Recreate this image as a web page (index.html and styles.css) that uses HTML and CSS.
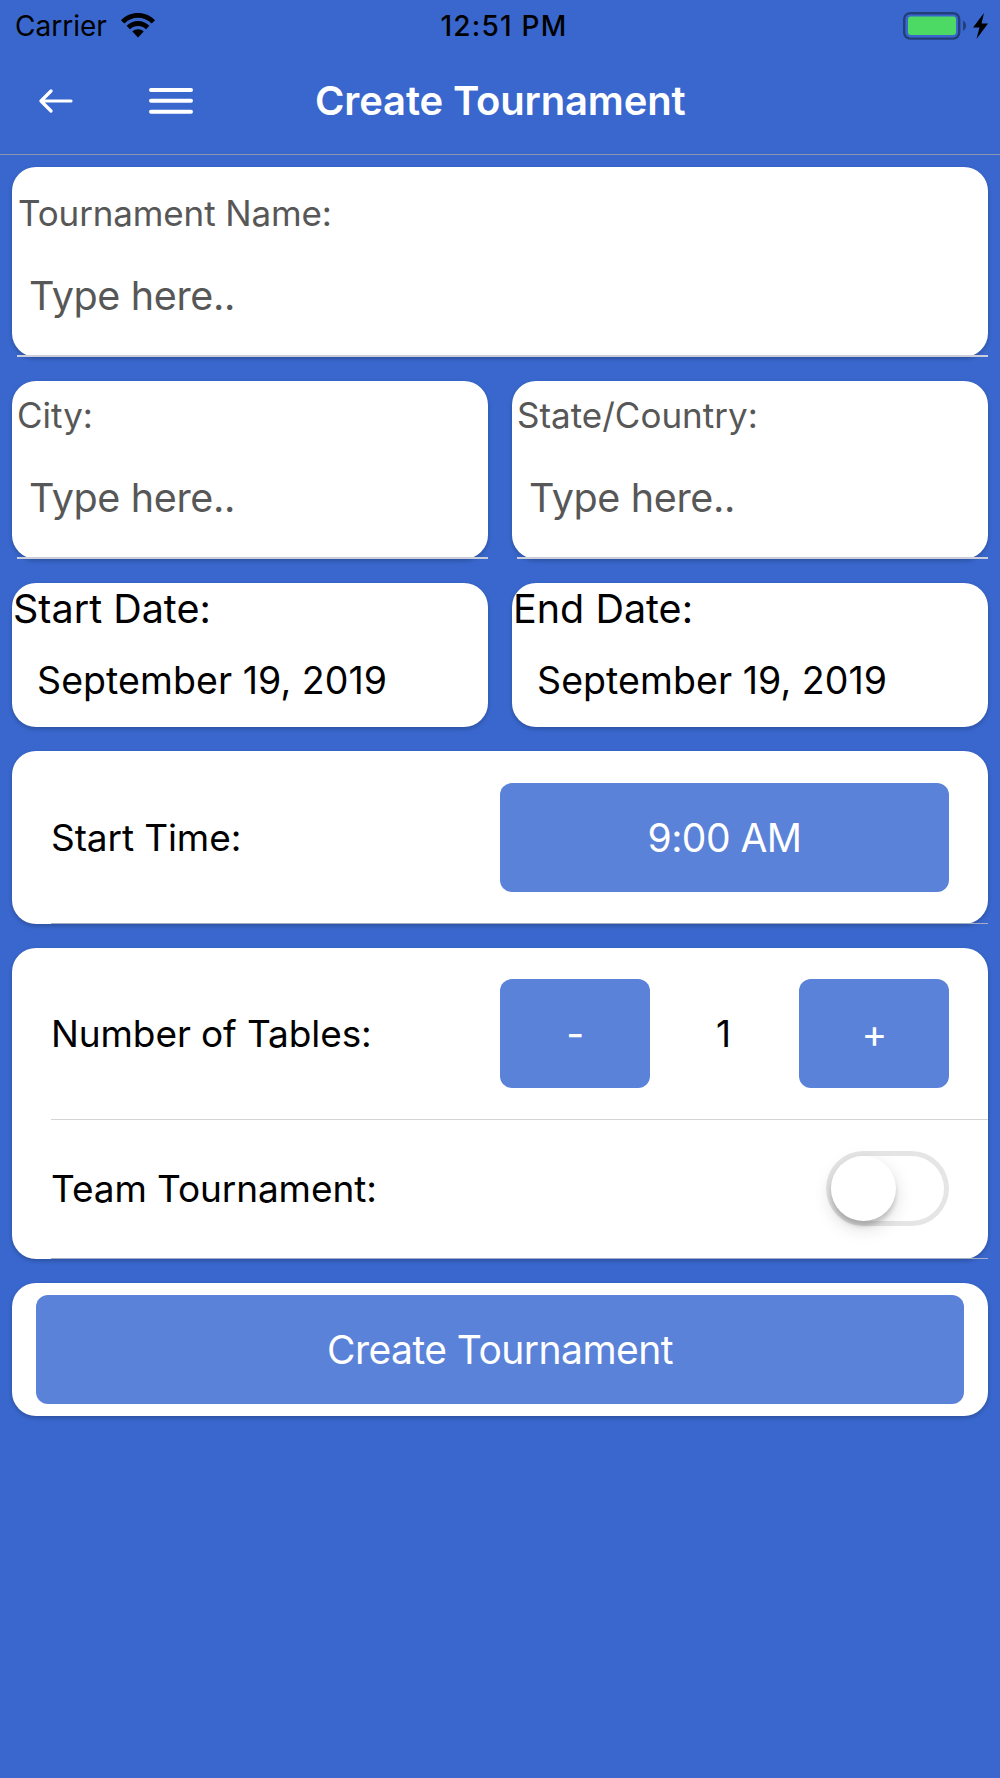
FILE: index.html
```html
<!DOCTYPE html>
<html lang="en">
<head>
    <meta charset="UTF-8">
    <meta name="viewport" content="width=device-width, initial-scale=1.0">
    <title>Create Tournament</title>
    <link rel="stylesheet" href="styles.css">
</head>
<body>
    <header class="header">
        <div class="status-bar">
            <div class="status-left">
                <span class="carrier">Carrier</span>
                <svg class="wifi" width="34" height="25" viewBox="0 0 34 25">
                    <path d="M0 7.2C9.5-2.4 24.500-2.400 34 7.200L30.700 10.500C23 2.800 11 2.800 3.300 10.500Z"/>
                    <path d="M5.600 12.800C12 6.500 22 6.500 28.400 12.800L25 16.200C20.500 11.800 13.500 11.800 9 16.200Z"/>
                    <path d="M11.300 18.600C14.500 15.500 19.500 15.500 22.700 18.600L17 24.400Z"/>
                </svg>
            </div>
            <span class="clock">12:51 PM</span>
            <div class="status-right">
                <svg width="86" height="28" viewBox="0 0 86 28">
                    <rect x="1.200" y="1.200" width="55" height="25.400" rx="6" fill="none" stroke="#223e7b" stroke-width="2.400"/>
                    <rect x="5" y="4.500" width="48" height="18.500" rx="3" fill="#4cd964"/>
                    <path d="M60 8.500C64 10.500 64 17 60 19Z" fill="#223e7b"/>
                    <path d="M81 1L70 15.500H76.500L73.500 27L85 11.500H78.500Z"/>
                </svg>
            </div>
        </div>
        <div class="navbar">
            <svg class="back" width="34" height="24" viewBox="0 0 34 24">
                <path d="M12 2L2 12L12 22M2.500 12H32"/>
            </svg>
            <svg class="menu" width="44" height="28" viewBox="0 0 44 28">
                <path d="M2 3H42M2 13.800H42M2 24.700H42"/>
            </svg>
            <h1>Create Tournament</h1>
        </div>
    </header>
    <form class="content">
        <div class="card field field-name">
            <label for="name">Tournament Name:</label>
            <input type="text" id="name" placeholder="Type here..">
        </div>
        <div class="columns">
            <div class="card field">
                <label for="city">City:</label>
                <input type="text" id="city" placeholder="Type here..">
            </div>
            <div class="card field">
                <label for="state">State/Country:</label>
                <input type="text" id="state" placeholder="Type here..">
            </div>
        </div>
        <div class="columns">
            <div class="card date">
                <span class="date-label">Start Date:</span>
                <span class="date-value">September 19, 2019</span>
            </div>
            <div class="card date">
                <span class="date-label">End Date:</span>
                <span class="date-value">September 19, 2019</span>
            </div>
        </div>
        <div class="card list">
            <div class="row">
                <span class="row-label">Start Time:</span>
                <button type="button" class="btn btn-time">9:00 AM</button>
            </div>
        </div>
        <div class="card list list-tables">
            <div class="row row-count">
                <span class="row-label">Number of Tables:</span>
                <div class="stepper">
                    <button type="button" class="btn">-</button>
                    <span class="count">1</span>
                    <button type="button" class="btn">+</button>
                </div>
            </div>
            <div class="row row-team">
                <span class="row-label">Team Tournament:</span>
                <div class="switch"><div class="knob"></div></div>
            </div>
        </div>
        <div class="card submit">
            <button type="button" class="btn">Create Tournament</button>
        </div>
    </form>
</body>
</html>
```
FILE: styles.css
```css
* {
    box-sizing: border-box;
}

body {
    margin: 0;
    min-height: 1778px;
    background: #3967cd;
    color: #000;
    font-family: Inter, "Liberation Sans", sans-serif;
}

.header {
    height: 155px;
    border-bottom: 1px solid #8b95ac;
}

.status-bar {
    display: grid;
    grid-template-columns: 1fr auto 1fr;
    align-items: center;
    height: 51px;
    padding: 0 11px 0 15px;
    font-size: 28px;
}

.status-left {
    display: flex;
    align-items: center;
    gap: 14px;
}

.clock {
    padding-left: 4px;
    font-weight: 500;
    letter-spacing: 1.2px;
}

.status-right {
    display: flex;
    justify-content: flex-end;
}

.navbar {
    display: grid;
    grid-template-columns: 110px 166px 1fr;
    align-items: center;
    height: 99px;
    padding-left: 39px;
    color: #fff;
}

.back,
.menu {
    fill: none;
    stroke: #fff;
    stroke-width: 3.2;
    stroke-linecap: round;
    stroke-linejoin: round;
}

.menu {
    stroke-width: 4;
}

h1 {
    margin: 0;
    font-size: 40px;
    font-weight: 600;
    line-height: 48px;
    letter-spacing: -0.15px;
    white-space: nowrap;
}

.content {
    display: flex;
    flex-direction: column;
    gap: 24px;
    padding: 12px;
}

.columns {
    display: grid;
    grid-template-columns: 1fr 1fr;
    gap: 24px;
}

.card {
    position: relative;
    background: #fff;
    border-radius: 24px;
    box-shadow: 0 2px 4px rgba(0, 0, 0, 0.22);
}

.field {
    display: flex;
    flex-direction: column;
    height: 178px;
    padding: 13px 5px 0;
}

.field-name {
    height: 190px;
    padding-top: 25px;
}

/* item underline, runs past the rounded corner */
.field::after {
    content: "";
    position: absolute;
    left: 5px;
    right: 0;
    bottom: 0;
    height: 2px;
    background: #cbced8;
}

.field label {
    height: 42px;
    font-size: 35px;
    line-height: 42px;
    color: #575757;
}

.field-name label {
    padding-left: 1px;
    letter-spacing: -0.13px;
}

.field input {
    width: 100%;
    height: 60px;
    margin-top: 32px;
    padding: 0 12px;
    border: none;
    outline: none;
    background: none;
    font: 39.500px Inter, "Liberation Sans", sans-serif;
    letter-spacing: -0.35px;
}

.field input::placeholder {
    color: #575757;
    opacity: 1;
}

.date {
    display: flex;
    flex-direction: column;
    height: 144px;
}

.date-label {
    padding: 1px 0 0 1px;
    font-size: 39.500px;
    line-height: 50px;
}

.date-value {
    margin-top: 21px;
    padding-left: 25px;
    font-size: 37.500px;
    line-height: 51px;
    letter-spacing: 0.07px;
}

.list {
    height: 173px;
}

.list-tables {
    height: 311px;
}

.row {
    display: flex;
    align-items: center;
    justify-content: space-between;
    height: 173px;
    margin-left: 39px;
    padding: 0 39px 1px 0;
    position: relative;
}

.row::after {
    content: "";
    position: absolute;
    left: 0;
    right: 0;
    bottom: 0;
    height: 1px;
    background: #a3adc4;
}

.row:not(:last-child)::after {
    background: #d4d4d4;
}

.row-count {
    height: 172px;
}

.row-team {
    height: 139px;
    padding-bottom: 2px;
}

.row-label {
    font-size: 37px;
    letter-spacing: -0.1px;
}

.btn {
    height: 109px;
    padding: 0;
    border: none;
    border-radius: 12px;
    background: #5a82d9;
    color: #fff;
    font: 39px Inter, "Liberation Sans", sans-serif;
    letter-spacing: -0.55px;
}

.btn-time {
    width: 449px;
}

.stepper {
    display: grid;
    grid-template-columns: repeat(3, 1fr);
    align-items: center;
    width: 449px;
    text-align: center;
}

.count {
    padding-right: 2px;
    font-size: 37px;
}

.switch {
    width: 123px;
    height: 75px;
    padding: 5px;
    border-radius: 38px;
    box-shadow: inset 0 0 0 5px #e5e5e5;
}

.knob {
    width: 65px;
    height: 65px;
    border-radius: 50%;
    background: #fff;
    box-shadow: 0 7px 18px rgba(0, 0, 0, 0.15), 0 5px 4px rgba(0, 0, 0, 0.16);
}

.submit {
    height: 133px;
    padding: 12px 24px;
}

.submit .btn {
    width: 100%;
}
```
